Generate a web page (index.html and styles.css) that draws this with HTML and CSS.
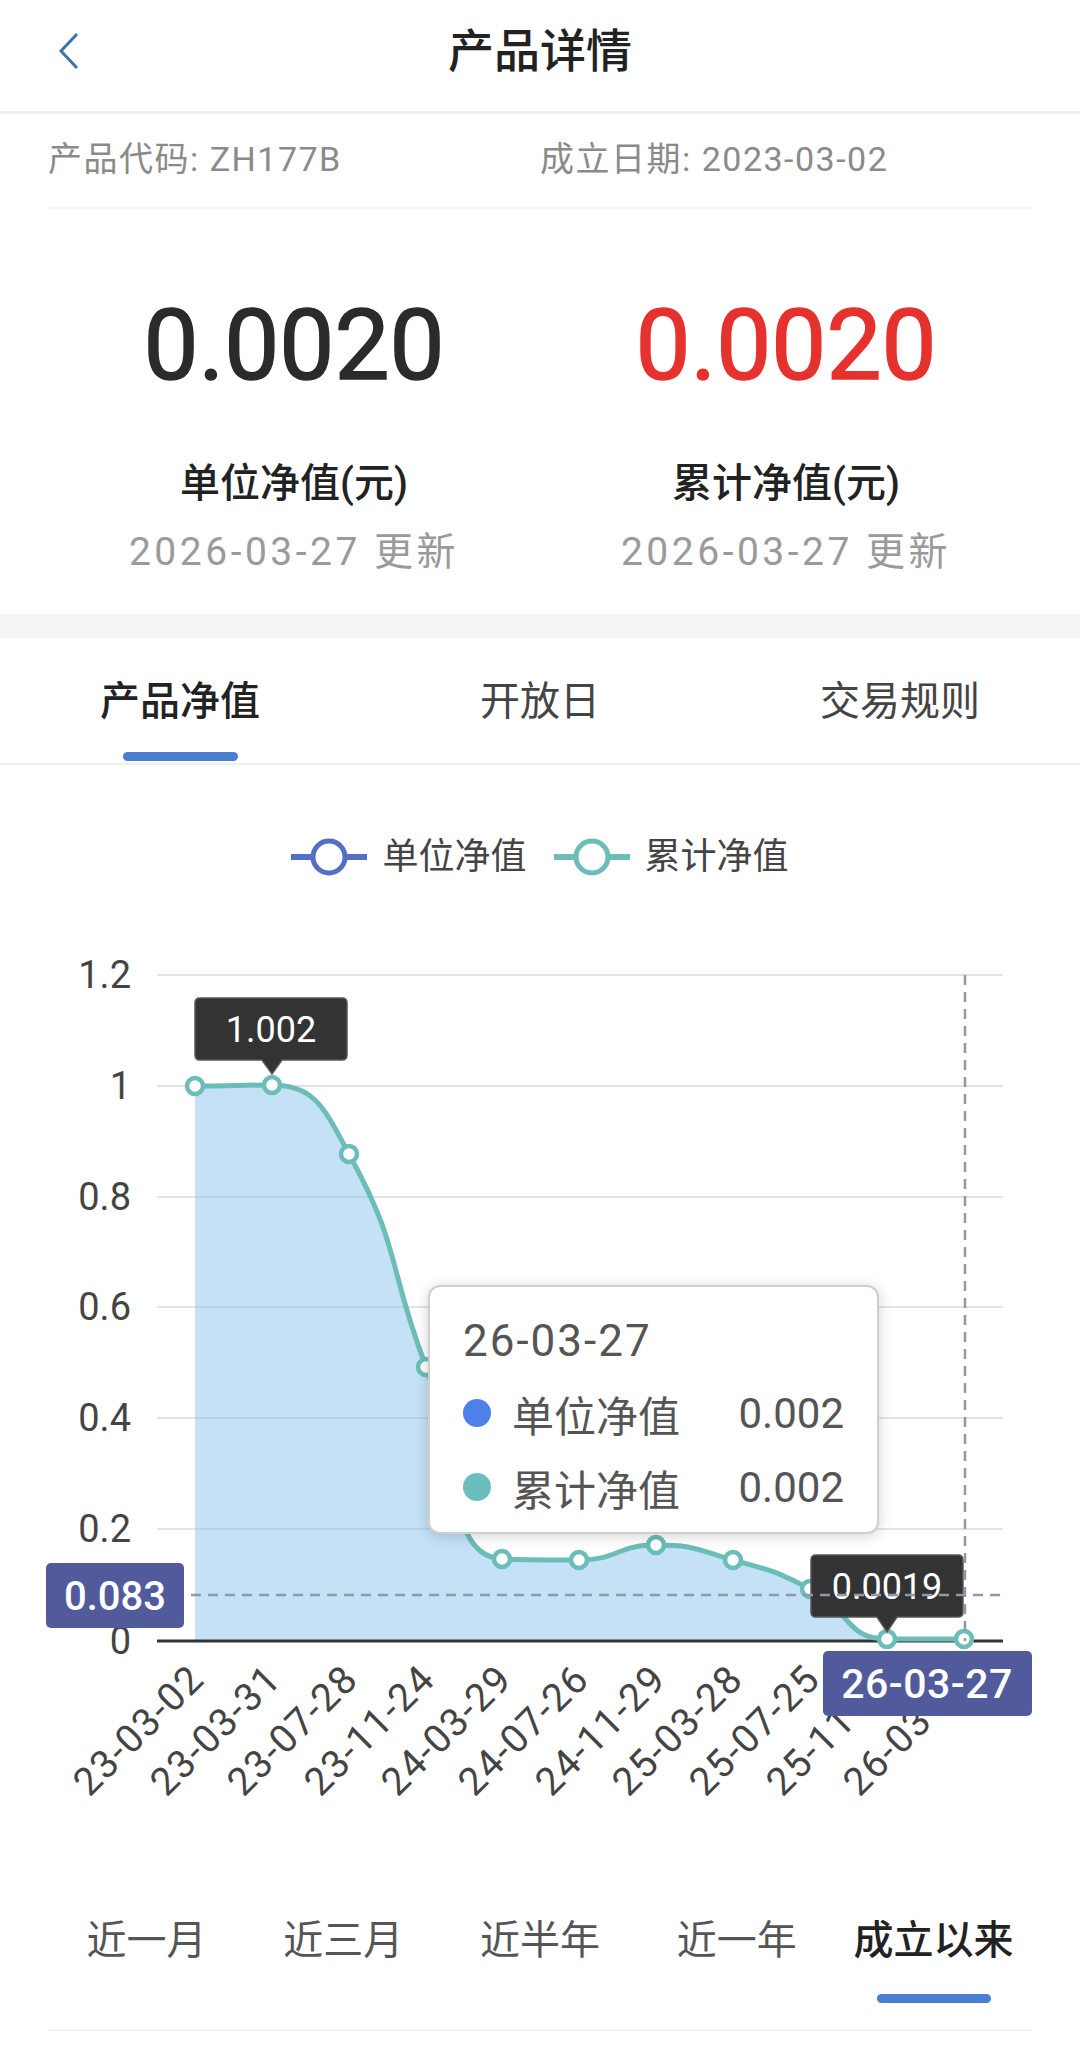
FILE: index.html
```html
<!DOCTYPE html>
<html>

<head>
  <meta charset="utf-8">
  <title>产品详情</title>
  <link rel="stylesheet" href="styles.css">
</head>

<body>
  <div id="nav-bar">
    <svg class="back-icon" width="24" height="38" viewBox="0 0 24 38">
      <polyline points="20,2 4,19 20,36" />
    </svg>
    <h1 id="nav-title">产品详情</h1>
    <div></div>
  </div>

  <div id="info-container">
    <div id="info-row">
      <span class="info-item">产品代码: ZH177B</span>
      <span class="info-item">成立日期: 2023-03-02</span>
    </div>
  </div>

  <div id="value-container">
    <div class="value-box">
      <div class="value-number">0.0020</div>
      <div class="value-label">单位净值(元)</div>
      <div class="value-date">2026-03-27 更新</div>
    </div>
    <div class="value-box">
      <div class="value-number red">0.0020</div>
      <div class="value-label">累计净值(元)</div>
      <div class="value-date">2026-03-27 更新</div>
    </div>
  </div>

  <div class="gray-band"></div>

  <div id="tab-bar">
    <div class="tab-item active"><span class="tab-text">产品净值</span><span class="tab-bar-line"></span></div>
    <div class="tab-item"><span class="tab-text">开放日</span><span class="tab-bar-line"></span></div>
    <div class="tab-item"><span class="tab-text">交易规则</span><span class="tab-bar-line"></span></div>
  </div>

  <div id="legend">
    <div class="legend-item">
      <svg class="legend-icon" width="76" height="40" viewBox="0 0 76 40">
        <line x1="0" y1="20" x2="76" y2="20" stroke="#5470c6" stroke-width="6" />
        <circle cx="38" cy="20" r="16" fill="#fff" stroke="#5470c6" stroke-width="5" />
      </svg>
      <span>单位净值</span>
    </div>
    <div class="legend-item">
      <svg class="legend-icon" width="76" height="40" viewBox="0 0 76 40">
        <line x1="0" y1="20" x2="76" y2="20" stroke="#6cbdb7" stroke-width="6" />
        <circle cx="38" cy="20" r="16" fill="#fff" stroke="#6cbdb7" stroke-width="5" />
      </svg>
      <span>累计净值</span>
    </div>
  </div>

  <div id="chart-container">
    <svg id="chart" width="1080" height="960" viewBox="0 900 1080 960">
      <g class="grid-lines">
        <line x1="157" y1="978" x2="1003" y2="978" />
        <line x1="157" y1="1089" x2="1003" y2="1089" />
        <line x1="157" y1="1200" x2="1003" y2="1200" />
        <line x1="157" y1="1310" x2="1003" y2="1310" />
        <line x1="157" y1="1421" x2="1003" y2="1421" />
        <line x1="157" y1="1532" x2="1003" y2="1532" />
      </g>

      <path class="chart-area" d="M195,1089 C233,1089 239,1088 272,1088 C316,1088 325,1113 349,1157 C402,1254 386,1264 426,1370 C462,1467 446,1559 502,1562 C523,1563 541,1563 579,1563 C618,1563 617,1548 656,1548 C694,1548 695,1552 733,1563 C772,1574 774,1573 810,1592 C851,1613 845,1642 887,1642 C922,1642 926,1642 964,1642 L964,1644 L195,1644 Z" />

      <line class="axis-line" x1="157" y1="1644" x2="1003" y2="1644" />

      <g class="y-labels">
        <text x="131" y="978">1.2</text>
        <text x="131" y="1089">1</text>
        <text x="131" y="1200">0.8</text>
        <text x="131" y="1310">0.6</text>
        <text x="131" y="1421">0.4</text>
        <text x="131" y="1532">0.2</text>
        <text x="131" y="1644">0</text>
      </g>

      <g class="x-labels">
        <text x="197" y="1675" transform="rotate(-45 197 1675)">23-03-02</text>
        <text x="274" y="1675" transform="rotate(-45 274 1675)">23-03-31</text>
        <text x="351" y="1675" transform="rotate(-45 351 1675)">23-07-28</text>
        <text x="428" y="1675" transform="rotate(-45 428 1675)">23-11-24</text>
        <text x="505" y="1675" transform="rotate(-45 505 1675)">24-03-29</text>
        <text x="582" y="1675" transform="rotate(-45 582 1675)">24-07-26</text>
        <text x="659" y="1675" transform="rotate(-45 659 1675)">24-11-29</text>
        <text x="736" y="1675" transform="rotate(-45 736 1675)">25-03-28</text>
        <text x="813" y="1675" transform="rotate(-45 813 1675)">25-07-25</text>
        <text x="890" y="1675" transform="rotate(-45 890 1675)">25-11-28</text>
        <text x="967" y="1675" transform="rotate(-45 967 1675)">26-03-27</text>
      </g>

      <path class="chart-line" d="M195,1089 C233,1089 239,1088 272,1088 C316,1088 325,1113 349,1157 C402,1254 386,1264 426,1370 C462,1467 446,1559 502,1562 C523,1563 541,1563 579,1563 C618,1563 617,1548 656,1548 C694,1548 695,1552 733,1563 C772,1574 774,1573 810,1592 C851,1613 845,1642 887,1642 C922,1642 926,1642 964,1642" />

      <g class="chart-points">
        <circle cx="195" cy="1089" r="8" />
        <circle cx="272" cy="1088" r="8" />
        <circle cx="349" cy="1157" r="8" />
        <circle cx="426" cy="1370" r="8" />
        <circle cx="502" cy="1562" r="8" />
        <circle cx="579" cy="1563" r="8" />
        <circle cx="656" cy="1548" r="8" />
        <circle cx="733" cy="1563" r="8" />
        <circle cx="810" cy="1592" r="8" />
        <circle cx="887" cy="1642" r="8" />
        <circle cx="964" cy="1642" r="8" />
      </g>

      <!-- max / min labels -->
      <path class="mark-box" d="M200,1001 H342 Q347,1001 347,1006 V1058 Q347,1063 342,1063 H282 L272,1077 L262,1063 H200 Q195,1063 195,1058 V1006 Q195,1001 200,1001 Z" />
      <text class="mark-text" x="271" y="1033">1.002</text>
      <path class="mark-box" d="M816,1558 H958 Q963,1558 963,1563 V1615 Q963,1620 958,1620 H897 L887,1635 L877,1620 H816 Q811,1620 811,1615 V1563 Q811,1558 816,1558 Z" />
      <text class="mark-text" x="887" y="1590">0.0019</text>

      <!-- axis pointer -->
      <line class="pointer-line" x1="965" y1="978" x2="965" y2="1644" />
      <line class="pointer-line" x1="157" y1="1598" x2="1003" y2="1598" />
      <rect class="pointer-box" x="46" y="1566" width="138" height="65" rx="5" />
      <text class="pointer-text" x="115" y="1599">0.083</text>
      <rect class="pointer-box" x="823" y="1654" width="209" height="65" rx="5" />
      <text class="pointer-text wide" x="927" y="1687">26-03-27</text>
    </svg>

    <div class="chart-tooltip">
      <div class="tooltip-date">26-03-27</div>
      <div class="tooltip-row">
        <span class="tooltip-dot dot-unit"></span>
        <span class="tooltip-name">单位净值</span>
        <span class="tooltip-value">0.002</span>
      </div>
      <div class="tooltip-row">
        <span class="tooltip-dot dot-total"></span>
        <span class="tooltip-name">累计净值</span>
        <span class="tooltip-value">0.002</span>
      </div>
    </div>
  </div>

  <div id="period-tabs">
    <div class="period-item"><span class="period-text">近一月</span><span class="period-bar"></span></div>
    <div class="period-item"><span class="period-text">近三月</span><span class="period-bar"></span></div>
    <div class="period-item"><span class="period-text">近半年</span><span class="period-bar"></span></div>
    <div class="period-item"><span class="period-text">近一年</span><span class="period-bar"></span></div>
    <div class="period-item active"><span class="period-text">成立以来</span><span class="period-bar"></span></div>
  </div>
</body>

</html>
```

FILE: styles.css
```css
body {
  margin: 0;
  padding: 0;
  background-color: #fff;
  font-family: Roboto, "Noto Sans CJK SC", sans-serif;
  color: #222;
}

#nav-bar {
  display: grid;
  grid-template-columns: 1fr auto 1fr;
  align-items: center;
  height: 114px;
  padding-bottom: 10px;
  box-sizing: border-box;
  border-bottom: 3px solid #efefef;
}

.back-icon {
  margin-left: 57px;
}

.back-icon polyline {
  fill: none;
  stroke: #3f74a6;
  stroke-width: 3;
}

#nav-title {
  margin: 0;
  font-size: 46px;
  font-weight: 500;
  line-height: 1;
  color: #222;
}

#info-container {
  padding: 0 48px;
}

#info-row {
  display: grid;
  grid-template-columns: 1fr 1fr;
  align-items: center;
  height: 95px;
  padding-bottom: 9px;
  box-sizing: border-box;
  border-bottom: 2px solid #f1f1f1;
  font-size: 34px;
  letter-spacing: 1.5px;
  color: #8a8a8a;
}

#value-container {
  display: grid;
  grid-template-columns: 1fr 1fr;
  padding: 77px 48px 34px;
}

.value-box {
  display: flex;
  flex-direction: column;
  align-items: center;
}

.value-number {
  font-size: 98px;
  line-height: 120px;
  color: #2b2b2b;
  -webkit-text-stroke: 1.5px currentColor;
}

.value-number.red {
  color: #e6322e;
}

.value-label {
  margin-top: 48px;
  font-size: 40px;
  line-height: 60px;
  font-weight: 500;
  color: #222;
}

.value-date {
  margin-top: 10px;
  font-size: 39px;
  line-height: 56px;
  letter-spacing: 3.5px;
  color: #9a9a9a;
}

.gray-band {
  height: 24px;
  background-color: #f3f4f6;
}

#tab-bar {
  display: grid;
  grid-template-columns: 1fr 1fr 1fr;
  height: 127px;
  border-bottom: 2px solid #efefef;
  box-sizing: border-box;
}

.tab-item {
  display: flex;
  flex-direction: column;
  align-items: center;
  padding-top: 39px;
}

.tab-text {
  font-size: 40px;
  line-height: 50px;
  color: #444;
}

.tab-bar-line {
  width: 115px;
  height: 9px;
  margin-top: 25px;
  border-radius: 5px;
}

.tab-item.active .tab-text {
  color: #222;
  font-weight: 500;
}

.tab-item.active .tab-bar-line {
  background-color: #4a7fcf;
}

#legend {
  display: flex;
  justify-content: center;
  align-items: center;
  gap: 27px;
  padding-top: 67px;
  height: 50px;
}

.legend-item {
  display: flex;
  align-items: center;
  gap: 15px;
  font-size: 36px;
  line-height: 50px;
  color: #444;
}

#chart-container {
  position: relative;
  margin-top: 15px;
  height: 960px;
}

#chart {
  display: block;
  font-family: Roboto, "Noto Sans CJK SC", sans-serif;
}

.grid-lines line {
  stroke: #e3e3e3;
  stroke-width: 2;
}

.chart-area {
  fill: #8cc3eb;
  fill-opacity: 0.5;
}

.axis-line {
  stroke: #333;
  stroke-width: 3;
}

.y-labels text {
  font-size: 38px;
  fill: #444;
  text-anchor: end;
  dominant-baseline: central;
}

.x-labels text {
  font-size: 39px;
  fill: #444;
  text-anchor: end;
  dominant-baseline: central;
  letter-spacing: 1.5px;
}

.chart-line {
  fill: none;
  stroke: #6cbdb7;
  stroke-width: 5;
}

.chart-points circle {
  fill: #fff;
  stroke: #6cbdb7;
  stroke-width: 4.5;
}

.mark-box {
  fill: #333;
  stroke: #555;
  stroke-width: 1.5;
}

.mark-text {
  font-size: 36px;
  fill: #fff;
  text-anchor: middle;
  dominant-baseline: central;
}

.pointer-line {
  stroke: #8d98ab;
  stroke-width: 2.5;
  stroke-dasharray: 10 7;
}

.pointer-box {
  fill: #515b9c;
}

.pointer-text {
  font-size: 40px;
  font-weight: 500;
  fill: #fff;
  text-anchor: middle;
  dominant-baseline: central;
}

.pointer-text.wide {
  font-size: 41px;
  letter-spacing: 0.5px;
}

.chart-tooltip {
  position: absolute;
  left: 428px;
  top: 388px;
  width: 451px;
  height: 249px;
  box-sizing: border-box;
  padding: 24px 33px 14px;
  background-color: #fff;
  border: 2px solid #cfcfcf;
  border-radius: 12px;
  box-shadow: 0 2px 14px rgba(0, 0, 0, 0.18);
  color: #555;
}

.tooltip-date {
  font-size: 44px;
  line-height: 60px;
  letter-spacing: 2px;
}

.tooltip-row {
  display: flex;
  align-items: center;
  height: 64px;
  margin-top: 10px;
  font-size: 42px;
}

.tooltip-dot {
  width: 28px;
  height: 28px;
  border-radius: 50%;
  margin-right: 21px;
}

.dot-unit {
  background-color: #4e80ea;
}

.dot-total {
  background-color: #6cbdbd;
}

.tooltip-value {
  margin-left: auto;
}

#period-tabs {
  display: grid;
  grid-template-columns: repeat(5, 1fr);
  margin: 0 48px;
  padding: 59px 0 26px;
  border-bottom: 2px solid #f1f1f1;
}

.period-item {
  display: flex;
  flex-direction: column;
  align-items: center;
}

.period-text {
  font-size: 40px;
  line-height: 50px;
  color: #555;
}

.period-bar {
  width: 114px;
  height: 9px;
  margin-top: 28px;
  border-radius: 5px;
}

.period-item.active .period-text {
  color: #222;
  font-weight: 500;
}

.period-item.active .period-bar {
  background-color: #4a7fcf;
}
```
